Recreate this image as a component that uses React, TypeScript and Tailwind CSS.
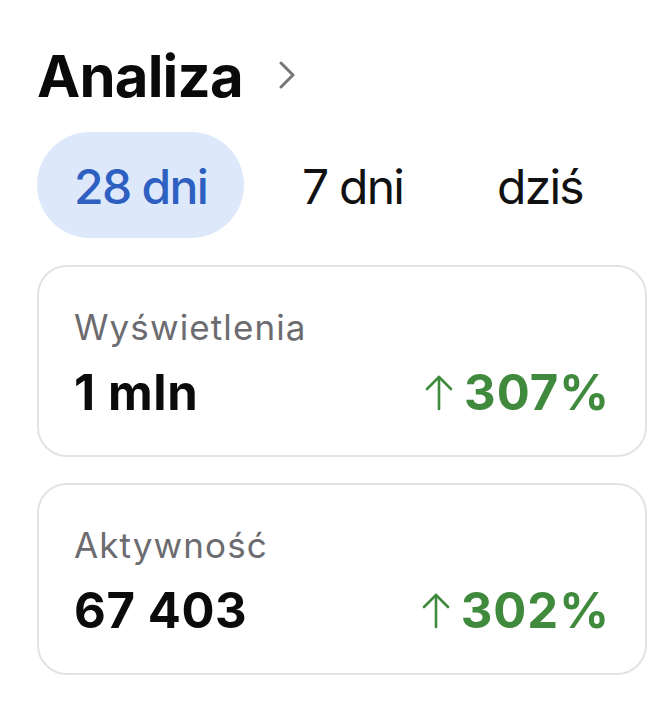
import React from "react";

const font = { fontFamily: "Inter, 'Noto Sans', sans-serif" };

function Arrow() {
  return (
    <svg width="30" height="36" viewBox="0 0 30 36" fill="none" stroke="#3f8a3c" strokeWidth="2.6" strokeLinecap="round" strokeLinejoin="round">
      <path d="M15 2 V34" />
      <path d="M3 14 L15 2 L27 14" />
    </svg>
  );
}

function Card({ label, value, pct }: { label: string; value: string; pct: string }) {
  return (
    <div className="border-2 border-[#e3e3e6] rounded-[30px] pt-[40px] pb-[34px] pl-[35px] pr-[35px] flex flex-col">
      <div className="text-[35px] leading-[40px] text-[#6c6c70] tracking-[1.1px] whitespace-nowrap">{label}</div>
      <div className="mt-[18px] flex items-center justify-between h-[56px]">
        <div className="text-[49px] leading-[56px] font-bold text-[#0b0b0b] tracking-[0.6px] whitespace-nowrap">{value}</div>
        <div className="flex items-center gap-[10px]">
          <Arrow />
          <div className="text-[49px] leading-[56px] font-bold text-[#3f8a3c] tracking-[1px] whitespace-nowrap">{pct}</div>
        </div>
      </div>
    </div>
  );
}

function Tab({ label, active }: { label: string; active?: boolean }) {
  return (
    <div
      className={
        active
          ? "h-[106px] px-[37px] pt-[3px] shrink-0 rounded-full bg-[#dde9fb] flex items-center justify-center text-[48px] font-medium text-[#2e60c2] tracking-[-1.7px] whitespace-nowrap"
          : "h-[106px] px-[36px] pt-[3px] shrink-0 rounded-full flex items-center justify-center text-[48px] text-[#111111] tracking-[-1.8px] whitespace-nowrap"
      }
    >
      {label}
    </div>
  );
}

export default function App() {
  return (
    <div className="w-[665px] h-[706px] bg-white pl-[37px] pr-[18px] pt-[41px]" style={font}>
      <div className="flex items-center h-[70px]">
        <div className="text-[58px] leading-[70px] font-bold text-[#0a0a0a] tracking-[-0.8px]">Analiza</div>
        <svg className="ml-[35px] mt-[-2px]" width="18" height="28" viewBox="0 0 18 28" fill="none" stroke="#777779" strokeWidth="3" strokeLinecap="round" strokeLinejoin="round">
          <path d="M3 2 L15 14 L3 26" />
        </svg>
      </div>
      <div className="mt-[21px] flex gap-[22px]">
        <Tab label="28 dni" active />
        <Tab label="7 dni" />
        <Tab label="dziś" />
      </div>
      <div className="mt-[27px] flex flex-col gap-[26px]">
        <Card label="Wyświetlenia" value="1 mln" pct="307%" />
        <Card label="Aktywność" value="67 403" pct="302%" />
      </div>
    </div>
  );
}
